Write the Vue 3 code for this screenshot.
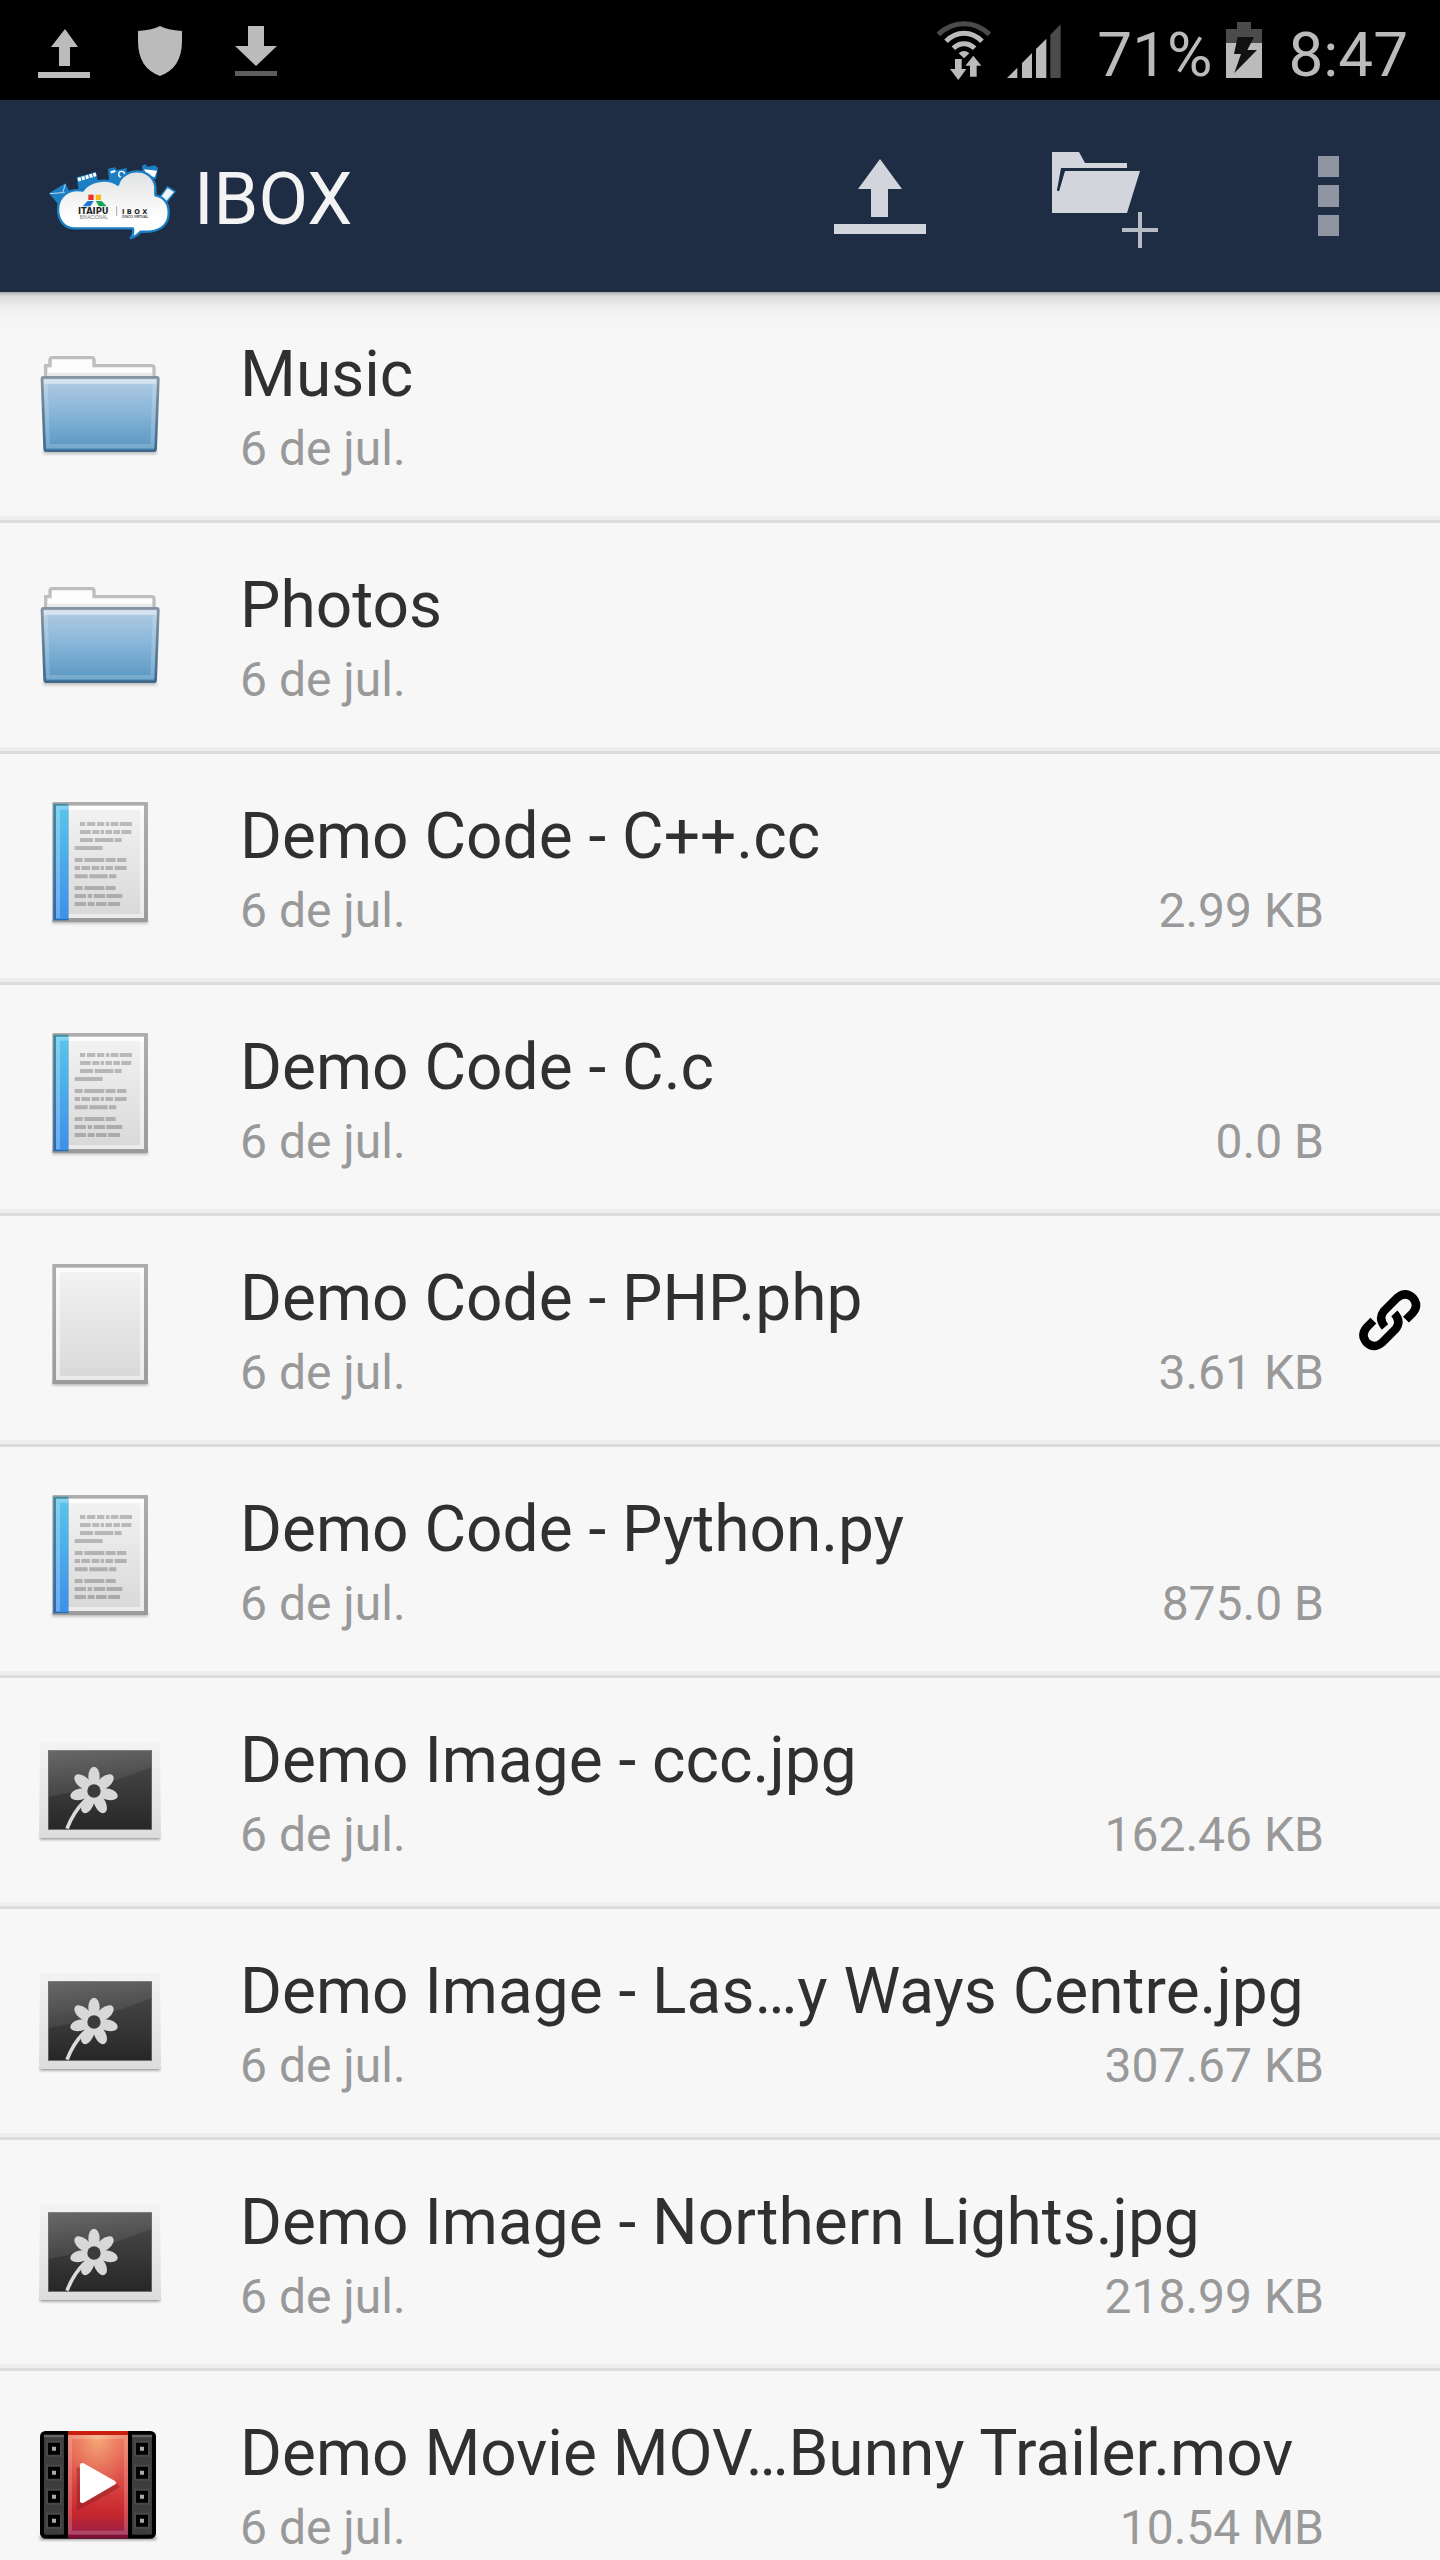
<script setup>
const DATE = '6 de jul.'

const files = [
  { name: 'Music', kind: 'folder' },
  { name: 'Photos', kind: 'folder' },
  { name: 'Demo Code - C++.cc', kind: 'code', size: '2.99 KB' },
  { name: 'Demo Code - C.c', kind: 'code', size: '0.0 B' },
  { name: 'Demo Code - PHP.php', kind: 'blank', size: '3.61 KB', shared: true },
  { name: 'Demo Code - Python.py', kind: 'code', size: '875.0 B' },
  { name: 'Demo Image - ccc.jpg', kind: 'image', size: '162.46 KB' },
  { name: 'Demo Image - Las…y Ways Centre.jpg', kind: 'image', size: '307.67 KB' },
  { name: 'Demo Image - Northern Lights.jpg', kind: 'image', size: '218.99 KB' },
  { name: 'Demo Movie MOV…Bunny Trailer.mov', kind: 'movie', size: '10.54 MB' },
]

// Text strokes on the code page: y, then start/end pairs.
const codeLines = [
  [192, 240, 256, 261, 286, 291, 313, 318, 328, 332, 355, 359, 396],
  [216, 240, 272, 277, 298, 302, 312, 316, 336, 340, 360, 364, 394],
  [240, 240, 279, 284, 340, 344, 365],
  [264, 224, 308],
  [300, 224, 248, 253, 313, 317, 347, 351, 379],
  [324, 224, 240, 244, 270, 275, 298, 302, 312, 316, 339, 344, 380],
  [349, 224, 263, 268, 323, 327, 349],
  [384, 224, 248, 253, 313, 317, 347],
  [408, 224, 258, 263, 276, 281, 315, 319, 367],
  [432, 224, 258, 263, 284, 288, 320, 324, 360],
]

const codePath = codeLines
  .map(([y, ...xs]) => {
    let d = ''
    for (let i = 0; i < xs.length; i += 2) d += `M${xs[i]} ${y}H${xs[i + 1]}`
    return d
  })
  .join('')

const petals = [0, 51, 103, 154, 206, 257, 309]
const holes = [146, 218, 290, 362]
</script>

<template>
  <div class="app">
    <svg class="defs" aria-hidden="true">
      <defs>
        <linearGradient id="folderFront" x1="0" y1="0" x2="0" y2="1">
          <stop offset="0" stop-color="#b4cde2" />
          <stop offset="0.5" stop-color="#86b4d8" />
          <stop offset="1" stop-color="#5796c2" />
        </linearGradient>
        <linearGradient id="folderEdge" x1="0" y1="0" x2="0" y2="1">
          <stop offset="0" stop-color="#84939f" />
          <stop offset="1" stop-color="#3f6a8b" />
        </linearGradient>
        <linearGradient id="paper" x1="0" y1="0" x2="0" y2="1">
          <stop offset="0" stop-color="#f2f2f2" />
          <stop offset="1" stop-color="#d9d9d9" />
        </linearGradient>
        <linearGradient id="paperRim" x1="0" y1="0" x2="0" y2="1">
          <stop offset="0" stop-color="#ffffff" />
          <stop offset="0.08" stop-color="#f8f8f8" />
          <stop offset="1" stop-color="#ebebeb" />
        </linearGradient>
        <linearGradient id="paperEdge" x1="0" y1="0" x2="0" y2="1">
          <stop offset="0" stop-color="#adadad" />
          <stop offset="1" stop-color="#9b9b9b" />
        </linearGradient>
        <linearGradient id="spine" x1="0" y1="0" x2="0" y2="1">
          <stop offset="0" stop-color="#5bc4ea" />
          <stop offset="1" stop-color="#3c90ea" />
        </linearGradient>
        <linearGradient id="spineEdge" x1="0" y1="0" x2="0" y2="1">
          <stop offset="0" stop-color="#45899f" />
          <stop offset="1" stop-color="#2c68ab" />
        </linearGradient>
        <linearGradient id="photo" x1="0" y1="0" x2="0" y2="1">
          <stop offset="0" stop-color="#4c4c4c" />
          <stop offset="1" stop-color="#272727" />
        </linearGradient>
        <linearGradient id="photoGlare" x1="0" y1="0" x2="0.6" y2="1">
          <stop offset="0" stop-color="#fff" stop-opacity="0.16" />
          <stop offset="1" stop-color="#fff" stop-opacity="0.04" />
        </linearGradient>
        <linearGradient id="frame" x1="0" y1="0" x2="0" y2="1">
          <stop offset="0" stop-color="#f3f3f3" />
          <stop offset="1" stop-color="#dcdcdc" />
        </linearGradient>
        <linearGradient id="film" x1="0" y1="0" x2="0" y2="1">
          <stop offset="0" stop-color="#e8705a" />
          <stop offset="0.45" stop-color="#dc4a44" />
          <stop offset="0.8" stop-color="#c5252c" />
          <stop offset="1" stop-color="#99204a" />
        </linearGradient>
        <radialGradient id="filmGlow" cx="0.5" cy="0" r="0.6">
          <stop offset="0" stop-color="#f8b47c" stop-opacity="0.9" />
          <stop offset="1" stop-color="#f09070" stop-opacity="0" />
        </radialGradient>
        <linearGradient id="filmEdge" x1="0" y1="0" x2="0" y2="1">
          <stop offset="0" stop-color="#cc1e0c" />
          <stop offset="1" stop-color="#7c1038" />
        </linearGradient>
        <linearGradient id="cloud" x1="0" y1="0" x2="0" y2="1">
          <stop offset="0" stop-color="#dfe0e1" />
          <stop offset="0.7" stop-color="#ffffff" />
        </linearGradient>
        <filter id="soft" x="-20%" y="-100%" width="140%" height="300%">
          <feGaussianBlur stdDeviation="5" />
        </filter>
      </defs>
    </svg>

    <div class="status">
      <div class="notices">
        <svg width="52" height="100" viewBox="38 0 52 100" fill="#bbb">
          <path d="M65 29L78 47H70V66H59V47H51ZM38 72H90V78H38Z" />
        </svg>
        <svg width="49" height="100" viewBox="138 0 49 100" fill="#bbb">
          <path d="M160 26Q167 30 182 31V41C182 60 174 71 160 76C146 71 138 60 138 41V31Q153 30 160 26Z" />
        </svg>
        <svg width="42" height="100" viewBox="235 0 42 100" fill="#bbb">
          <path d="M248 26H264V46H277L256 66L235 46H248Z" />
          <path d="M235 71H277V76H235Z" fill="#5e5e5e" />
        </svg>
      </div>
      <div class="system">
        <svg class="wifi" width="56" height="100" viewBox="49 0 168 300" fill="none">
          <g stroke-width="15" stroke="#bbb">
            <path d="M56 103Q90 71 133 71T209 103" stroke="#4b4b4b" />
            <path d="M79 124Q103 100 133 100T187 124" />
            <path d="M101 145Q115 131 133 131T165 145" />
          </g>
          <path d="M117 160Q133 146 149 160L133 175Z" fill="#bbb" />
          <path d="M106 177H126V207H140L116 240L91 207H106Z" fill="#bbb" />
          <path d="M160 160L192 200H176V236H146V200H130Z" fill="#000" />
          <path d="M161 167L185 197H171V230H151V197H137Z" fill="#bbb" />
        </svg>
        <svg class="signal" width="54" height="100" viewBox="261 0 162 300" fill="#bbb">
          <path d="M261 234L292 203V234ZM306 234V189L336 159V234ZM348 234V147L379 116V234Z" />
          <path d="M391 234V104L422 73V234Z" fill="#4b4b4b" />
        </svg>
        <span class="reading">71%</span>
        <svg class="battery" width="36" height="100" viewBox="918 0 108 300">
          <path d="M951 66H993V87H1026V130H918V87H951Z" fill="#4b4b4b" />
          <path d="M918 129H1026V234H918Z" fill="#bbb" />
          <path d="M953 111H1002L982 150H1011L943 219L963 162H942Z" fill="#111" />
        </svg>
        <span class="reading">8:47</span>
      </div>
    </div>

    <header class="bar">
      <svg class="logo" width="128" height="88" viewBox="54 36 384 264" role="img" aria-label="Itaipu Ibox">
        <g fill="#1c7fc4">
          <path d="M57 160L106 130L124 166L84 192Z" />
          <path d="M140 112L198 96L206 136L146 150Z" />
          <path d="M234 86L256 82L260 90L290 84V130H238Z" />
          <path d="M336 78L346 72L352 80L374 76L380 80L384 84L378 118L340 110Z" />
          <path d="M412 137L438 154L410 190L384 176Z" />
        </g>
        <g fill="none" stroke="#b9dcf2" stroke-width="3">
          <path d="M60 161L98 158L106 133M98 158L108 160" />
          <path d="M144 119L198 103" stroke="#fff" stroke-width="11" stroke-dasharray="9 3" />
          <path d="M242 97L256 93" stroke="#fff" stroke-width="7" />
          <circle cx="275" cy="103" r="9" stroke="#fff" stroke-width="4" />
        </g>
        <path d="M342 88L381 92L374 112L350 104Z" fill="#fff" />
        <path d="M413 144L432 156L408 184L392 172Z" fill="#eef5fa" />
        <path
          d="M130 265C103 265 84 240 84 208C84 170 115 144 158 152C178 122 232 112 264 134C276 84 366 76 376 140V166C402 170 418 192 416 222C414 258 386 278 332 275Q318 290 302 294Q312 282 309 265Z"
          fill="url(#cloud)" stroke="#1c7fc4" stroke-width="7" stroke-linejoin="round"
        />
        <path d="M175 164H191V180H175Z" fill="#ee3124" />
        <path d="M197 164H213V180H197Z" fill="#fdb913" />
        <path d="M173 183H191L181 199H158Z" fill="#1b75d0" />
        <path d="M197 183H215L230 199H207Z" fill="#12a54c" />
        <text class="mark" x="144" y="223">ITAIPU</text>
        <text class="tiny" x="149" y="238">BINACIONAL</text>
        <path d="M260 198V228" stroke="#aaa" stroke-width="3" />
        <text class="mark box" x="276" y="221">I B O X</text>
        <text class="tiny dark" x="277" y="235">DISCO VIRTUAL</text>
      </svg>
      <h1>IBOX</h1>
      <nav class="actions">
        <button type="button" aria-label="Upload">
          <svg width="112" height="112" viewBox="824 140 112 112" fill="#d2d6dc">
            <path d="M880 159L902 189H888V217H871V189H858ZM834 224H926V234H834Z" />
          </svg>
        </button>
        <button type="button" aria-label="New folder">
          <svg width="112" height="112" viewBox="1048 140 112 112" fill="#d2d6dc">
            <path d="M1052 152H1079L1085 163H1127V168H1061L1057 190L1059 191L1065 171H1140L1127 213H1052Z" />
            <path d="M1064 169L1058 191" stroke="#1e2d44" stroke-width="2" />
            <path d="M1138 212H1142V228H1158V232H1142V248H1138V232H1122V228H1138Z" fill="#b6bbc4" />
          </svg>
        </button>
        <button type="button" aria-label="More options">
          <svg width="112" height="112" viewBox="1272 140 112 112" fill="#8f96a2">
            <path d="M1318 156H1339V177H1318ZM1318 185H1339V207H1318ZM1318 215H1339V236H1318Z" />
          </svg>
        </button>
      </nav>
    </header>

    <ul class="list">
      <li v-for="file in files" :key="file.name" class="row">
        <svg v-if="file.kind === 'folder'" class="icon" viewBox="108 48 384 384">
          <path d="M130 392H470V402H130Z" fill="#000" opacity="0.25" filter="url(#soft)" />
          <path
            d="M137 176V137H150V120Q150 113 157 113H275Q282 113 282 120V137H455Q462 137 462 144V176Z"
            fill="#fdfdfd" stroke="#bebebe" stroke-width="10"
          />
          <path d="M143 158H456V172H143Z" fill="#dedede" opacity="0.6" />
          <path
            d="M130 172H471Q475 172 475 178L467 386Q467 392 461 392H140Q134 392 134 386L126 178Q126 172 130 172Z"
            fill="url(#folderFront)" stroke="url(#folderEdge)" stroke-width="8"
          />
          <path d="M137 185H464L457 378H144Z" fill="none" stroke="#fff" stroke-opacity="0.18" stroke-width="12" />
          <path d="M132 178H469V191H132Z" fill="#fff" opacity="0.4" />
        </svg>

        <svg v-else-if="file.kind === 'code' || file.kind === 'blank'" class="icon" viewBox="108 114 384 384">
          <path d="M157 480H444V490H157Z" fill="#000" opacity="0.3" filter="url(#soft)" />
          <rect x="157" y="126" width="287" height="360" rx="4" fill="url(#paperEdge)" />
          <rect x="168" y="137" width="264" height="337" fill="url(#paperRim)" />
          <rect x="180" y="150" width="240" height="312" fill="url(#paper)" />
          <template v-if="file.kind === 'code'">
            <rect x="160" y="131" width="45" height="350" fill="url(#spineEdge)" />
            <rect x="168" y="137" width="37" height="340" fill="url(#spine)" />
            <path d="M174 474V143H205" fill="none" stroke="#fff" stroke-opacity="0.25" stroke-width="12" />
            <path :d="codePath" stroke="#000" stroke-opacity="0.22" stroke-width="12" />
          </template>
        </svg>

        <svg v-else-if="file.kind === 'image'" class="icon" viewBox="48 6 384 384">
          <path d="M60 348H420V358H60Z" fill="#000" opacity="0.45" filter="url(#soft)" />
          <path d="M60 66H420L423 354H57Z" fill="url(#frame)" />
          <rect x="84" y="91" width="312" height="238" fill="url(#photo)" />
          <path d="M84 91H396V140Q250 200 84 232Z" fill="url(#photoGlare)" />
          <path d="M141 326Q160 276 194 243" fill="none" stroke="#dadada" stroke-width="11" />
          <ellipse
            v-for="angle in petals" :key="angle" cx="222" cy="170" rx="17" ry="30"
            :transform="`rotate(${angle} 222 213)`" fill="#d8d8d8"
          />
          <circle cx="222" cy="213" r="29" fill="#d8d8d8" />
          <circle cx="222" cy="213" r="20" fill="#3b3b3b" />
          <rect x="85" y="92" width="310" height="236" fill="none" stroke="#777" stroke-width="2" />
        </svg>

        <svg v-else class="icon" viewBox="48 45 384 384">
          <path d="M60 408H408V420H60Z" fill="#000" opacity="0.4" filter="url(#soft)" />
          <rect x="60" y="93" width="348" height="323" rx="16" fill="#000" />
          <rect x="72" y="105" width="60" height="299" rx="4" fill="#3d3d3d" />
          <rect x="336" y="105" width="60" height="299" rx="4" fill="#3d3d3d" />
          <path d="M72 108H132M336 108H396" stroke="#666" stroke-width="7" />
          <g v-for="y in holes" :key="y">
            <path :d="`M102 ${y - 24}V${y + 24}M366 ${y - 24}V${y + 24}`" stroke="#484848" stroke-width="48" />
            <path :d="`M102 ${y - 18}V${y + 18}M366 ${y - 18}V${y + 18}`" stroke="#000" stroke-width="36" />
            <path :d="`M102 ${y - 6}V${y + 6}M366 ${y - 6}V${y + 6}`" stroke="#aaa" stroke-width="12" />
          </g>
          <rect x="144" y="93" width="180" height="323" fill="url(#filmEdge)" />
          <rect x="144" y="105" width="180" height="299" fill="url(#film)" />
          <rect x="144" y="105" width="180" height="299" fill="url(#filmGlow)" />
          <rect x="150" y="111" width="168" height="287" fill="none" stroke="#fff" stroke-opacity="0.18" stroke-width="12" />
          <path d="M170 200V326Q174 332 182 328L296 264Q300 260 296 256Z" fill="#8c1a24" opacity="0.45" />
          <path d="M180 194Q182 186 191 190L286 244Q291 248 286 253L191 308Q182 312 180 304Z" fill="#fff" />
        </svg>

        <div class="text">
          <h2>{{ file.name }}</h2>
          <p class="meta">
            <span>{{ DATE }}</span>
            <span>{{ file.size }}</span>
          </p>
        </div>

        <div class="badge">
          <svg v-if="file.shared" width="64" height="64" viewBox="775 143 192 192" role="img" aria-label="Shared link">
            <g fill="none" stroke="#000" stroke-width="25">
              <path d="M856 260Q835 235 852 213L893 172Q918 152 940 173Q959 196 938 219L919 238" />
              <path d="M821 241L802 260Q781 284 801 307Q823 327 847 307L888 266Q906 243 884 219" />
            </g>
          </svg>
        </div>
      </li>
    </ul>
  </div>
</template>

<style>
body {
  margin: 0;
  background: #f7f7f7;
}
</style>

<style scoped>
.app {
  display: flex;
  flex-direction: column;
  height: 100vh;
  overflow: hidden;
  font-family: Roboto, "Noto Sans", sans-serif;
  background: #f7f7f7;
}

svg {
  display: block;
  flex: none;
}

.defs {
  position: absolute;
  width: 0;
  height: 0;
}

.status {
  display: flex;
  flex: none;
  justify-content: space-between;
  height: 100px;
  padding: 0 32px 0 38px;
  background: #000;
  color: #bbb;
}

.notices,
.system {
  display: flex;
  align-items: center;
}

.notices {
  gap: 48px;
}

.reading {
  padding-top: 10px;
  font-size: 62px;
  line-height: 76px;
}

.wifi {
  margin-right: 15px;
}

.signal {
  margin-right: 36px;
}

.battery {
  margin: 0 26px 0 14px;
}

.bar {
  display: flex;
  flex: none;
  align-items: center;
  height: 192px;
  padding-left: 48px;
  background: #1e2d44;
}

h1,
h2,
p,
ul {
  margin: 0;
  padding: 0;
  font-weight: 400;
}

h1 {
  flex: 1;
  padding: 8px 0 0 18px;
  font-size: 72px;
  line-height: 84px;
  color: #f3f3f3;
}

.mark {
  font: 700 25px "DejaVu Sans", sans-serif;
  fill: #222;
}

.mark.box {
  font-size: 20px;
}

.tiny {
  font: 400 14px "Liberation Sans", sans-serif;
  fill: #777;
}

.tiny.dark {
  font-size: 10px;
  font-weight: 700;
  fill: #444;
}

.actions {
  display: flex;
}

.actions button {
  display: flex;
  align-items: center;
  justify-content: center;
  width: 224px;
  height: 192px;
  padding: 0;
  border: 0;
  background: none;
}

.list {
  flex: 1;
  min-height: 0;
  overflow-y: auto;
  scrollbar-width: none;
  list-style: none;
  background: linear-gradient(#a8a8a8 0, #c4c4c4 2px, #dadada 4px, #e6e6e6 10px, #f1f1f1 18px, #f5f5f5 28px, #f7f7f7 40px);
}

.row {
  display: flex;
  align-items: flex-start;
  box-sizing: border-box;
  height: 231px;
  padding: 44px 0 0 36px;
  border-bottom: 3px solid #dcdcdc;
  box-shadow: inset 0 -4px #eee;
}

.icon {
  width: 128px;
  height: 128px;
  margin-right: 76px;
}

.text {
  flex: 1;
  min-width: 0;
}

h2 {
  font-size: 64px;
  line-height: 78px;
  white-space: nowrap;
  color: #303030;
}

.meta {
  display: flex;
  justify-content: space-between;
  margin-top: 6px;
  font-size: 48px;
  line-height: 58px;
  color: #999;
}

.badge {
  flex: none;
  box-sizing: border-box;
  width: 116px;
  padding: 28px 0 0 34px;
}
</style>
